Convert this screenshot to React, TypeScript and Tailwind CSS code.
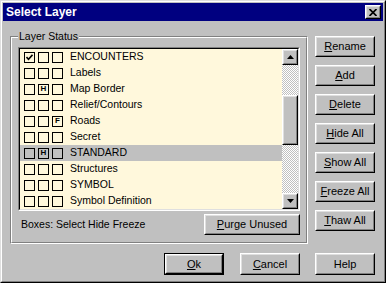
import { ReactNode } from "react"

const layers = [
  { name: "ENCOUNTERS", sel: true },
  { name: "Labels" },
  { name: "Map Border", hide: true },
  { name: "Relief/Contours" },
  { name: "Roads", freeze: true },
  { name: "Secret" },
  { name: "STANDARD", hide: true, current: true },
  { name: "Structures" },
  { name: "SYMBOL" },
  { name: "Symbol Definition" },
]

const Raised = ({ children, className = "" }: { children?: ReactNode; className?: string }) => (
  <div className={`border border-t-white border-l-white border-r-black border-b-black ${className}`}>
    <div className="h-full w-full border border-t-[#dfdfdf] border-l-[#dfdfdf] border-r-[#808080] border-b-[#808080] bg-[#c0c0c0] flex items-center justify-center">
      {children}
    </div>
  </div>
)

const Btn = ({ label, u, h = 21, def = false }: { label: string; u?: number; h?: number; def?: boolean }) => {
  const text =
    u === undefined ? (
      label
    ) : (
      <>
        {label.slice(0, u)}
        <span className="underline underline-offset-[1px]">{label[u]}</span>
        {label.slice(u + 1)}
      </>
    )
  if (def)
    return (
      <div className="w-[60px] border border-black" style={{ height: h }}>
        <Raised className="h-full text-[11px]">{text}</Raised>
      </div>
    )
  return (
    <Raised className="w-[60px] text-[11px]">
      <div className="flex items-center justify-center" style={{ height: h - 4 }}>
        {text}
      </div>
    </Raised>
  )
}

const Box = ({ children }: { children?: ReactNode }) => (
  <div className="w-[11px] h-[11px] border border-black flex items-center justify-center text-[8px] font-bold leading-none">
    {children}
  </div>
)

const Check = () => (
  <svg width="7" height="7" viewBox="0 0 7 7">
    <path d="M0.5 3 L2.5 5.2 L6.5 0.8" stroke="black" strokeWidth="1.6" fill="none" />
  </svg>
)

export default function App() {
  return (
    <div className="w-[386px] h-[283px] bg-[#c0c0c0] font-['Liberation_Sans',Arial,sans-serif] text-black border border-t-[#dfdfdf] border-l-[#dfdfdf] border-r-black border-b-black">
      <div className="h-full border border-t-white border-l-white border-r-[#808080] border-b-[#808080] p-px flex flex-col">
        {/* title bar */}
        <div className="h-[18px] bg-[#000080] flex items-center justify-between pl-[3px] pr-[2px]">
          <span className="text-white font-bold text-[12px] leading-none">Select Layer</span>
          <Raised className="w-[16px] h-[14px]">
            <svg width="8" height="7" viewBox="0 0 8 7">
              <path d="M0.5 0 L7.5 7 M7.5 0 L0.5 7" stroke="black" strokeWidth="1.7" />
            </svg>
          </Raised>
        </div>

        <div className="flex pl-[7px] pt-[15px]">
          {/* group box */}
          <div className="relative w-[298px] h-[208px] border border-t-[#808080] border-l-[#808080] border-r-white border-b-white">
            <span className="absolute left-[7px] -top-[7px] bg-[#c0c0c0] px-px text-[10.5px] leading-[12px]">
              Layer Status
            </span>
            <div className="h-full border border-t-white border-l-white border-r-[#808080] border-b-[#808080] pl-[6px] pt-[9px]">
              <div className="w-[282px] h-[164px] border border-t-[#808080] border-l-[#808080] border-r-white border-b-white">
                <div className="h-full border border-t-black border-l-black border-r-[#dfdfdf] border-b-[#dfdfdf] bg-[#fff8dc] flex">
                  <div className="flex-1 overflow-hidden">
                    {layers.map((l) => (
                      <div
                        key={l.name}
                        className={`h-[16px] flex items-center pl-[4px] gap-[3px] ${l.current ? "bg-[#c0c0c0]" : ""}`}
                      >
                        <Box>{l.sel && <Check />}</Box>
                        <Box>{l.hide && "H"}</Box>
                        <Box>{l.freeze && "F"}</Box>
                        <span className="ml-[4px] text-[10.5px]">{l.name}</span>
                      </div>
                    ))}
                  </div>
                  {/* scrollbar */}
                  <div className="w-[16px] flex flex-col bg-[image:repeating-conic-gradient(#c0c0c0_0%_25%,#ffffff_0%_50%)] bg-[length:2px_2px]">
                    <Raised className="h-[16px]">
                      <svg width="7" height="4" viewBox="0 0 7 4">
                        <polygon points="0,4 3.5,0 7,4" fill="black" />
                      </svg>
                    </Raised>
                    <div className="h-[30px]" />
                    <Raised className="h-[50px]" />
                    <div className="flex-1" />
                    <Raised className="h-[16px]">
                      <svg width="7" height="4" viewBox="0 0 7 4">
                        <polygon points="0,0 7,0 3.5,4" fill="black" />
                      </svg>
                    </Raised>
                  </div>
                </div>
              </div>
              <div className="w-[282px] mt-[3px] flex items-center justify-between">
                <span className="ml-[3px] text-[10.5px]">Boxes: Select Hide Freeze</span>
                <Raised className="w-[96px] h-[21px] text-[11px]">
                  <span>
                    <span className="underline underline-offset-[1px]">P</span>urge Unused
                  </span>
                </Raised>
              </div>
            </div>
          </div>

          {/* right buttons */}
          <div className="ml-[7px] flex flex-col gap-[8px]">
            <Btn label="Rename" u={0} />
            <Btn label="Add" u={0} />
            <Btn label="Delete" u={0} />
            <Btn label="Hide All" u={0} />
            <Btn label="Show All" u={0} />
            <Btn label="Freeze All" u={0} />
            <Btn label="Thaw All" u={0} />
          </div>
        </div>

        <div className="flex justify-end pr-[8px] mt-[9px]">
          <Btn label="Ok" u={0} h={22} def />
          <div className="ml-[16px]">
            <Btn label="Cancel" u={0} h={22} />
          </div>
          <div className="ml-[15px]">
            <Btn label="Help" h={22} />
          </div>
        </div>
      </div>
    </div>
  )
}
